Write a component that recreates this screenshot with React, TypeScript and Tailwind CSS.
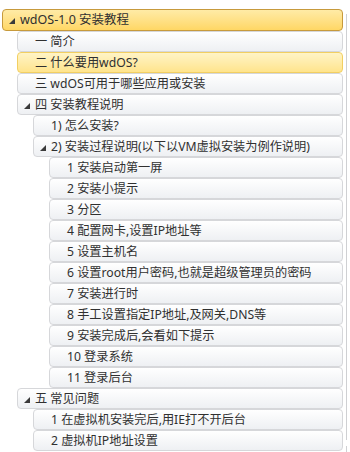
import React from 'react';

// Flat list of tree rows: level = indent depth, open = shows expand arrow
interface Row {
  label: string;
  level: number;
  open?: boolean;
  state?: 'selected' | 'hover';
}

const rows: Row[] = [
  { label: 'wdOS-1.0 安装教程', level: 0, open: true, state: 'selected' },
  { label: '一 简介', level: 1 },
  { label: '二 什么要用wdOS?', level: 1, state: 'hover' },
  { label: '三 wdOS可用于哪些应用或安装', level: 1 },
  { label: '四 安装教程说明', level: 1, open: true },
  { label: '1) 怎么安装?', level: 2 },
  { label: '2) 安装过程说明(以下以VM虚拟安装为例作说明)', level: 2, open: true },
  { label: '1 安装启动第一屏', level: 3 },
  { label: '2 安装小提示', level: 3 },
  { label: '3 分区', level: 3 },
  { label: '4 配置网卡,设置IP地址等', level: 3 },
  { label: '5 设置主机名', level: 3 },
  { label: '6 设置root用户密码,也就是超级管理员的密码', level: 3 },
  { label: '7 安装进行时', level: 3 },
  { label: '8 手工设置指定IP地址,及网关,DNS等', level: 3 },
  { label: '9 安装完成后,会看如下提示', level: 3 },
  { label: '10 登录系统', level: 3 },
  { label: '11 登录后台', level: 3 },
  { label: '五 常见问题', level: 1, open: true },
  { label: '1 在虚拟机安装完后,用IE打不开后台', level: 2 },
  { label: '2 虚拟机IP地址设置', level: 2 },
];

const indent = ['ml-0', 'ml-[15px]', 'ml-[31px]', 'ml-[47px]'];

function Arrow() {
  return (
    <svg width="6" height="6" viewBox="0 0 6 6" className="absolute left-[6px] top-[8px]">
      <polygon points="6,0 6,6 0,6" fill="#3a3a3a" />
    </svg>
  );
}

function TreeRow({ row }: { row: Row }) {
  let look = 'border-[#d6d7da] bg-gradient-to-b from-[#ffffff] to-[#eef0f3]';
  if (row.state === 'selected') look = 'border-[#c79a3c] bg-gradient-to-b from-[#ffeba6] to-[#ffd764]';
  if (row.state === 'hover') look = 'border-[#f2cf62] bg-gradient-to-b from-[#fff4c6] to-[#ffe48c]';

  return (
    <div
      className={`relative rounded-[4px] border ${look} ${indent[row.level]} ${
        row.level === 0 ? 'h-[22px]' : 'h-[21px]'
      }`}
    >
      {row.open && <Arrow />}
      <span
        className={`absolute left-[17px] top-0 leading-[19px] text-[#303030] whitespace-nowrap ${
          row.level === 0 ? 'text-[12.5px]' : 'text-[12.2px]'
        }`}
      >
        {row.label}
      </span>
    </div>
  );
}

export default function App() {
  return (
    <div className="w-[350px] h-[452px] bg-white overflow-hidden flex font-['Noto_Sans','Noto_Sans_CJK_SC',sans-serif]">
      {/* Tree */}
      <div className="w-[343px] pl-[2px] pt-[9px] flex flex-col">
        {rows.map((row, i) => (
          <TreeRow key={i} row={row} />
        ))}
      </div>
      {/* scrollbar edge */}
      <div className="ml-[3px] pt-[14px] flex flex-col">
        <div className="w-[1px] h-[426px] bg-[#cfd0d3]" />
        <div className="w-[1px] h-[6px]" />
        <div className="w-[1px] flex-1 bg-[#cfd0d3]" />
      </div>
    </div>
  );
}
